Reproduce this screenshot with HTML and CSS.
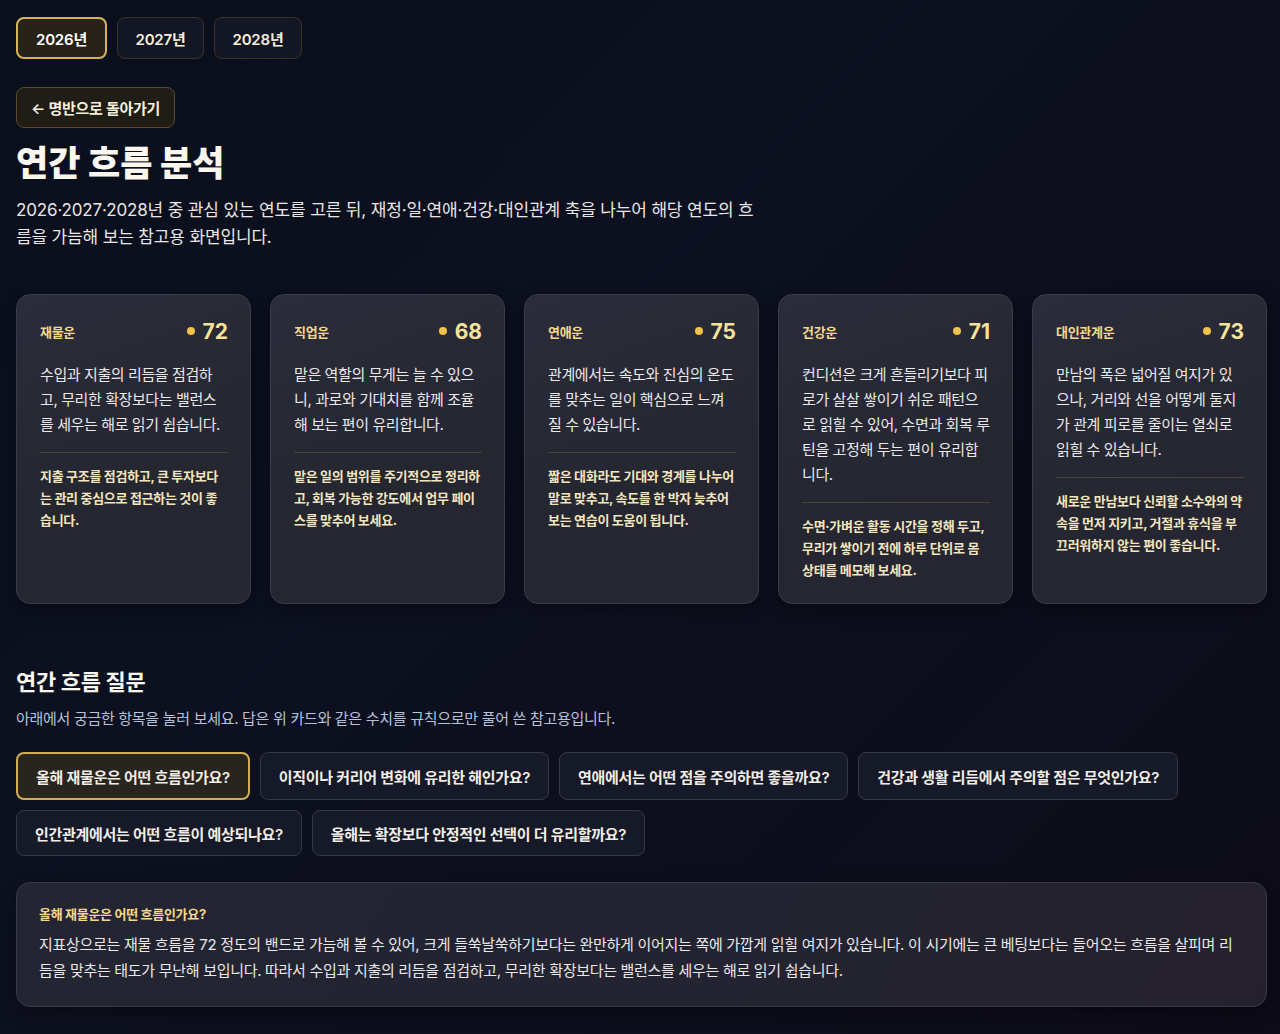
FILE: index.html
```html
<!DOCTYPE html>
<html lang="ko">
<head>
<meta charset="utf-8">
<title>연간 흐름 분석</title>
<link rel="stylesheet" href="styles.css">
</head>
<body>
<div class="page">
  <div class="years">
    <button class="year active">2026년</button>
    <button class="year">2027년</button>
    <button class="year">2028년</button>
  </div>
  <button class="back">← 명반으로 돌아가기</button>
  <h1 class="title">연간 흐름 분석</h1>
  <p class="lead">2026·2027·2028년 중 관심 있는 연도를 고른 뒤, 재정·일·연애·건강·대인관계 축을 나누어 해당 연도의 흐름을 가늠해 보는 참고용 화면입니다.</p>

  <div class="cards">
    <div class="card">
      <div class="card-head"><span class="label">재물운</span><span class="score"><i class="dot"></i>72</span></div>
      <p class="desc">수입과 지출의 리듬을 점검하고, 무리한 확장보다는 밸런스를 세우는 해로 읽기 쉽습니다.</p>
      <p class="tip">지출 구조를 점검하고, 큰 투자보다는 관리 중심으로 접근하는 것이 좋습니다.</p>
    </div>
    <div class="card">
      <div class="card-head"><span class="label">직업운</span><span class="score"><i class="dot"></i>68</span></div>
      <p class="desc">맡은 역할의 무게는 늘 수 있으니, 과로와 기대치를 함께 조율해 보는 편이 유리합니다.</p>
      <p class="tip">맡은 일의 범위를 주기적으로 정리하고, 회복 가능한 강도에서 업무 페이스를 맞추어 보세요.</p>
    </div>
    <div class="card">
      <div class="card-head"><span class="label">연애운</span><span class="score"><i class="dot"></i>75</span></div>
      <p class="desc">관계에서는 속도와 진심의 온도를 맞추는 일이 핵심으로 느껴질 수 있습니다.</p>
      <p class="tip">짧은 대화라도 기대와 경계를 나누어 말로 맞추고, 속도를 한 박자 늦추어 보는 연습이 도움이 됩니다.</p>
    </div>
    <div class="card">
      <div class="card-head"><span class="label">건강운</span><span class="score"><i class="dot"></i>71</span></div>
      <p class="desc">컨디션은 크게 흔들리기보다 피로가 살살 쌓이기 쉬운 패턴으로 읽힐 수 있어, 수면과 회복 루틴을 고정해 두는 편이 유리합니다.</p>
      <p class="tip">수면·가벼운 활동 시간을 정해 두고, 무리가 쌓이기 전에 하루 단위로 몸 상태를 메모해 보세요.</p>
    </div>
    <div class="card">
      <div class="card-head"><span class="label">대인관계운</span><span class="score"><i class="dot"></i>73</span></div>
      <p class="desc">만남의 폭은 넓어질 여지가 있으나, 거리와 선을 어떻게 둘지가 관계 피로를 줄이는 열쇠로 읽힐 수 있습니다.</p>
      <p class="tip">새로운 만남보다 신뢰할 소수와의 약속을 먼저 지키고, 거절과 휴식을 부끄러워하지 않는 편이 좋습니다.</p>
    </div>
  </div>

  <h2 class="section-title">연간 흐름 질문</h2>
  <p class="section-sub">아래에서 궁금한 항목을 눌러 보세요. 답은 위 카드와 같은 수치를 규칙으로만 풀어 쓴 참고용입니다.</p>

  <div class="questions">
    <button class="q active">올해 재물운은 어떤 흐름인가요?</button>
    <button class="q">이직이나 커리어 변화에 유리한 해인가요?</button>
    <button class="q">연애에서는 어떤 점을 주의하면 좋을까요?</button>
    <button class="q">건강과 생활 리듬에서 주의할 점은 무엇인가요?</button>
    <button class="q">인간관계에서는 어떤 흐름이 예상되나요?</button>
    <button class="q">올해는 확장보다 안정적인 선택이 더 유리할까요?</button>
  </div>

  <div class="answer">
    <div class="answer-title">올해 재물운은 어떤 흐름인가요?</div>
    <p class="answer-body">지표상으로는 재물 흐름을 72 정도의 밴드로 가늠해 볼 수 있어, 크게 들쑥날쑥하기보다는 완만하게 이어지는 쪽에 가깝게 읽힐 여지가 있습니다. 이 시기에는 큰 베팅보다는 들어오는 흐름을 살피며 리듬을 맞추는 태도가 무난해 보입니다. 따라서 수입과 지출의 리듬을 점검하고, 무리한 확장보다는 밸런스를 세우는 해로 읽기 쉽습니다.</p>
  </div>
</div>
</body>
</html>
```

FILE: styles.css
```css
* { box-sizing: border-box; }
html, body { margin: 0; padding: 0; }
body {
  min-height: 1034px;
  background: linear-gradient(135deg, #0a0f1c 0%, #0c1020 40%, #0d0b18 100%);
  color: #f1ede6;
  font-family: "Inter", "Noto Sans CJK KR", "Noto Sans", sans-serif;
}
.page {
  width: 1251px;
  margin-left: 16px;
  padding-top: 17px;
  padding-bottom: 28px;
}
button { font-family: inherit; cursor: pointer; }

.years { display: flex; gap: 10px; }
.year {
  height: 42px;
  padding: 0 17.5px;
  border-radius: 8px;
  border: 1px solid #3b3527;
  background: #131624;
  color: #f5efd9;
  font-size: 15px;
  font-weight: 600;
  letter-spacing: -0.2px;
}
.year.active {
  border: 2px solid #d8b35a;
  background: #282319;
  color: #ffffff;
  padding: 0 18px;
}
.back {
  display: block;
  margin-top: 28px;
  height: 41px;
  padding: 0 14px;
  border-radius: 8px;
  border: 1px solid #5a4a2c;
  background: #201c16;
  color: #f5efd9;
  font-size: 15px;
  font-weight: 600;
  letter-spacing: -0.3px;
}
.title {
  margin: 13px 0 0;
  font-size: 35px;
  line-height: 44px;
  font-weight: 800;
  letter-spacing: 0;
  color: #fbf7ee;
}
.lead {
  margin: 12px 0 0;
  width: 745px;
  font-size: 17px;
  line-height: 27px;
  letter-spacing: -0.15px;
  color: #e9e6e4;
}

.cards {
  margin-top: 43px;
  display: grid;
  grid-template-columns: repeat(5, 1fr);
  gap: 19px;
}
.card {
  height: 310px;
  padding: 20px 22px 20px 23px;
  border-radius: 14px;
  border: 1px solid #3a3c4a;
  background: linear-gradient(160deg, #2a2c3a 0%, #242630 60%, #272634 100%);
  box-shadow: 0 6px 16px rgba(0,0,0,0.35);
}
.card-head {
  display: flex;
  justify-content: space-between;
  align-items: center;
  height: 32px;
}
.label {
  font-size: 13px;
  font-weight: 700;
  color: #f5d889;
  letter-spacing: -0.3px;
}
.score {
  display: flex;
  align-items: center;
  gap: 8px;
  font-size: 21px;
  font-weight: 700;
  color: #f7e29b;
}
.dot {
  width: 8px;
  height: 8px;
  border-radius: 50%;
  background: #f2c14e;
  display: inline-block;
}
.desc {
  margin: 15px 0 0;
  padding-bottom: 15px;
  border-bottom: 1px solid #4a4336;
  font-size: 15px;
  line-height: 25px;
  letter-spacing: -0.4px;
  color: #ebe8ea;
}
.tip {
  margin: 12px 0 0;
  font-size: 13px;
  line-height: 22px;
  font-weight: 700;
  letter-spacing: -0.3px;
  color: #f3e5bd;
}

.section-title {
  margin: 62px 0 0;
  font-size: 22px;
  line-height: 32px;
  font-weight: 700;
  letter-spacing: -0.3px;
  color: #fbf7ee;
}
.section-sub {
  margin: 10px 0 0;
  font-size: 15px;
  line-height: 22px;
  letter-spacing: -0.3px;
  color: #b9c1d9;
}
.questions {
  margin-top: 22px;
  display: flex;
  flex-wrap: wrap;
  gap: 10px 10px;
}
.q {
  height: 48px;
  padding: 0 18px;
  border-radius: 8px;
  border: 1px solid #353848;
  background: #161927;
  color: #f1ede6;
  font-size: 15px;
  font-weight: 600;
  letter-spacing: -0.3px;
}
.q.active {
  border: 2px solid #d2ad55;
  background: #28241e;
}
.questions .q:nth-child(n+5) { height: 46px; }

.answer {
  margin-top: 26px;
  padding: 19px 22px 22px 22px;
  border-radius: 14px;
  border: 1px solid #393b49;
  background: linear-gradient(120deg, #232532 0%, #232331 60%, #25212c 100%);
  box-shadow: 0 6px 16px rgba(0,0,0,0.35);
}
.answer-title {
  font-size: 13px;
  line-height: 24px;
  font-weight: 700;
  color: #f5d889;
  letter-spacing: -0.3px;
}
.answer-body {
  margin: 6px 0 0;
  font-size: 15px;
  line-height: 26px;
  letter-spacing: -0.3px;
  color: #ebe8ea;
}
```
